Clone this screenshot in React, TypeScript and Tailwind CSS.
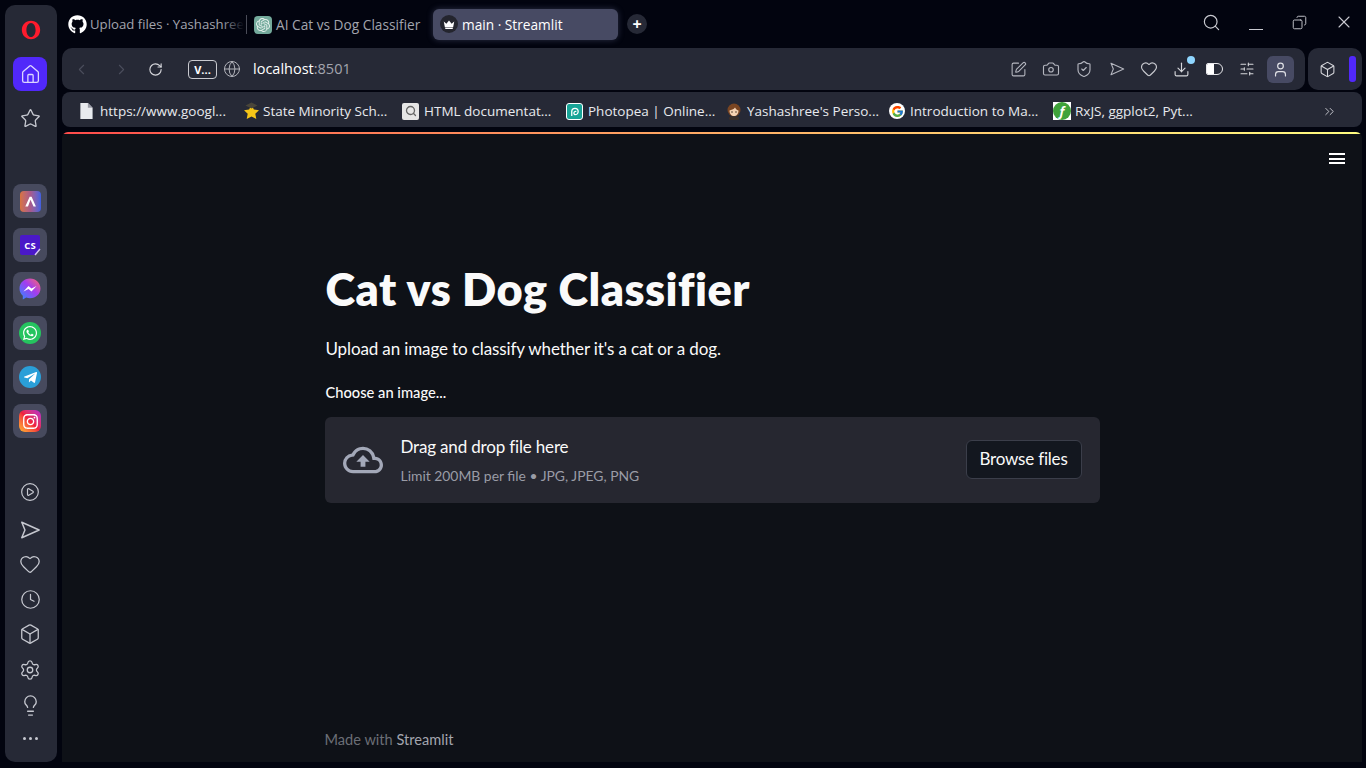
import { ReactNode } from "react"
import {
    Box, Camera, ChevronLeft, ChevronRight, ChevronsRight, CirclePlay, Clock, Copy, Download, Globe, Heart,
    Home, Lightbulb, RotateCw, Search, Settings, ShieldCheck, SlidersHorizontal, SquarePen, Star, User, X,
} from "lucide-react"
import { FaGithub, FaWhatsapp, FaTelegramPlane, FaInstagram } from "react-icons/fa"
import { FcGoogle } from "react-icons/fc"
import { SiOpenai } from "react-icons/si"

const UI_FONT = "font-['Open_Sans','Noto_Sans',sans-serif]"
const PAGE_FONT = "font-['Lato','Noto_Sans',sans-serif]"

function SendIcon({ className }: { className?: string }) {
    return (
        <svg viewBox="0 0 24 24" fill="none" stroke="currentColor" strokeWidth="1.6" strokeLinejoin="round" className={className}>
            <path d="M3 3.5 22 12 3 20.5 6.5 12Z" />
        </svg>
    )
}

function OperaLogo() {
    return (
        <svg viewBox="0 0 24 24" className="h-[20px] w-[20px]">
            <path fillRule="evenodd" fill="#ff1b2d" d="M12 1C5.600 1 1 5.900 1 12s4.600 11 11 11 11-4.900 11-11S18.400 1 12 1Zm0 2.500c3.200 0 5.500 3.800 5.500 8.500s-2.300 8.500-5.500 8.500-5.500-3.800-5.500-8.500 2.300-8.500 5.500-8.500Z" />
        </svg>
    )
}

function AppTile({ children }: { children: ReactNode }) {
    return <div className="flex h-[34px] w-[34px] items-center justify-center rounded-[8px] bg-[#474a5e]">{children}</div>
}

function Sidebar() {
    return (
        <aside className="mb-[6px] ml-[5px] mt-[5px] flex w-[52px] flex-col items-center rounded-[10px] bg-[#262936] pr-[2px] text-[#c6c8d0]">
            <div className="ml-[2px] mt-[15px]"><OperaLogo /></div>
            <div className="mt-[17px] flex h-[34px] w-[34px] items-center justify-center rounded-[8px] bg-[#5128fa] text-[#dcd6ff]">
                <Home size={21} strokeWidth={1.5} />
            </div>
            <Star size={21} strokeWidth={1.5} className="mt-[17px]" />

            <div className="mt-[55px] flex flex-col gap-[10px]">
                <AppTile>
                    <div className="flex h-[21px] w-[21px] items-center justify-center rounded-[4px] bg-linear-to-r from-[#d9733c] via-[#a85a8c] to-[#3f5fe0]">
                        <svg viewBox="0 0 12 12" className="h-[13px] w-[13px]"><path d="M5.200 1.500h1.800L11 10.500H8.800L6 4.300 3.700 10.500H1.200Z" fill="#fff" /></svg>
                    </div>
                </AppTile>
                <AppTile>
                    <svg viewBox="0 0 22 22" className="h-[22px] w-[22px]">
                        <path d="M3 1h16a2 2 0 0 1 2 2v12l-5 6H3a2 2 0 0 1-2-2V3a2 2 0 0 1 2-2Z" fill="#4a18c8" />
                        <path d="M16 21l5-6" stroke="#d8c8f5" strokeWidth="1.400" />
                        <text x="11" y="14.500" textAnchor="middle" fontSize="9.500" fontWeight="700" fill="#fff" fontFamily="Open Sans, sans-serif">CS</text>
                    </svg>
                </AppTile>
                <AppTile>
                    <svg viewBox="0 0 22 22" className="h-[22px] w-[22px]">
                        <defs>
                            <linearGradient id="msg" x1="0" y1="1" x2="1" y2="0">
                                <stop offset="0" stopColor="#2d8cff" />
                                <stop offset="0.55" stopColor="#a33cf0" />
                                <stop offset="1" stopColor="#ff6a6a" />
                            </linearGradient>
                        </defs>
                        <path d="M11 0.500C5 0.500 0.500 4.900 0.500 10.500c0 3 1.200 5.500 3.300 7.300V21.500l3.400-1.900c1.200.4 2.500.6 3.800.6 6 0 10.500-4.400 10.500-9.700S17 0.500 11 0.500Z" fill="url(#msg)" />
                        <path d="M4.500 13.500 9.500 8l3 2.600L17.500 8l-5 5.500-3-2.600Z" fill="#fff" />
                    </svg>
                </AppTile>
                <AppTile>
                    <div className="flex h-[22px] w-[22px] items-center justify-center rounded-full bg-[#25c45f] text-white"><FaWhatsapp size={16} /></div>
                </AppTile>
                <AppTile>
                    <div className="flex h-[22px] w-[22px] items-center justify-center rounded-full bg-[#2a9fd8] text-white"><FaTelegramPlane size={15} /></div>
                </AppTile>
                <AppTile>
                    <div className="flex h-[22px] w-[22px] items-center justify-center rounded-[6px] bg-linear-to-tr from-[#fdb32b] via-[#f0203c] to-[#b51fd0] text-white"><FaInstagram size={17} /></div>
                </AppTile>
            </div>

            <div className="mt-[44px] flex flex-col items-center">
                <CirclePlay size={20} strokeWidth={1.4} />
                <SendIcon className="mt-[17px] h-[22px] w-[22px]" />
                <Heart size={22} strokeWidth={1.4} className="mt-[12px]" />
                <Clock size={21} strokeWidth={1.4} className="mt-[14px]" />
                <Box size={22} strokeWidth={1.4} className="mt-[13px]" />
                <Settings size={22} strokeWidth={1.4} className="mt-[14px]" />
                <Lightbulb size={23} strokeWidth={1.4} className="mt-[13px]" />
                <div className="mt-[20px] flex gap-[3px]">
                    <span className="h-[3px] w-[3px] rounded-full bg-[#c6c8d0]" />
                    <span className="h-[3px] w-[3px] rounded-full bg-[#c6c8d0]" />
                    <span className="h-[3px] w-[3px] rounded-full bg-[#c6c8d0]" />
                </div>
            </div>
        </aside>
    )
}

function TabBar() {
    return (
        <div className={`flex h-[48px] items-center text-[13.700px] ${UI_FONT}`}>
            <div className="relative ml-[6px] flex w-[176px] items-center whitespace-nowrap pt-[2px] text-[13.200px] text-[#a3a5ae]">
                <FaGithub size={19} className="shrink-0 text-white" />
                <span className="ml-[3px]">Upload files · Yashashree</span>
                <span className="absolute inset-y-0 right-0 w-[22px] bg-linear-to-r from-transparent to-[#02040f]" />
            </div>
            <div className="ml-[2px] h-[19px] w-px bg-[#4a4c58]" />
            <div className="ml-[7px] mt-px flex h-[18px] w-[18px] items-center justify-center rounded-[4px] bg-[#74aa9c] text-[#e8f3ef]">
                <SiOpenai size={14} />
            </div>
            <span className="ml-[4px] mt-[2px] w-[157px] whitespace-nowrap text-[#a3a5ae]">AI Cat vs Dog Classifier</span>
            <div className="flex h-[31px] w-[185px] items-center rounded-[6px] bg-[#474a63] pl-[7px] text-white shadow-[0_0_6px_rgba(120,125,170,0.35)]">
                <span className="flex h-[18px] w-[18px] items-center justify-center rounded-full bg-[#24252e]">
                    <svg viewBox="0 0 16 12" className="h-[9px] w-[12px]"><path d="M1 2 4.500 5 8 0.500 11.500 5 15 2l-1.500 7.500h-11ZM3 10.300h10V12H3Z" fill="#fff" /></svg>
                </span>
                <span className="ml-[4px] mt-[2px]">main · Streamlit</span>
            </div>
            <div className="ml-[9px] flex h-[20px] w-[20px] items-center justify-center rounded-full bg-[#262936] text-[16px] font-bold leading-none text-white">+</div>
            <div className="-mt-[4px] ml-auto flex items-center text-[#c9cad0]">
                <Search size={19} strokeWidth={1.5} />
                <span className="ml-[28px] mt-[15px] h-[1.500px] w-[14px] bg-[#c9cad0]" />
                <Copy size={15} strokeWidth={1.5} className="ml-[29px] -scale-x-100" />
                <X size={20} strokeWidth={1.3} className="ml-[27px] mr-[8px]" />
            </div>
        </div>
    )
}

function AddressBar() {
    return (
        <div className="flex h-[42px] gap-[3px]">
            <div className={`flex flex-1 items-center rounded-[10px] bg-[#262936] ${UI_FONT}`}>
                <ChevronLeft size={17} strokeWidth={1.5} className="ml-[11px] text-[#4b4e5c]" />
                <ChevronRight size={17} strokeWidth={1.5} className="ml-[23px] text-[#4b4e5c]" />
                <RotateCw size={15} strokeWidth={1.8} className="ml-[18px] text-[#d6d7dc]" />
                <div className="ml-[25px] flex h-[19px] w-[29px] items-center justify-center rounded-[4px] border border-[#c9cad0] text-[11px] font-bold leading-none text-white">V...</div>
                <Globe size={18} strokeWidth={1.3} className="ml-[6px] text-[#b5b6bd]" />
                <span className="ml-[12px] text-[14.500px] text-white">localhost<span className="text-[#a3a5ae]">:8501</span></span>
                <div className="ml-auto flex items-center text-[#b5b7c0]">
                    <SquarePen size={17} strokeWidth={1.5} />
                    <Camera size={18} strokeWidth={1.5} className="ml-[15px]" />
                    <ShieldCheck size={18} strokeWidth={1.5} className="ml-[15px]" />
                    <SendIcon className="ml-[16px] h-[16px] w-[16px]" />
                    <Heart size={18} strokeWidth={1.5} className="ml-[15px] text-[#c9cad0]" />
                    <div className="relative ml-[15px] text-[#d6d7dc]">
                        <Download size={17} strokeWidth={1.6} />
                        <span className="absolute -right-[5px] -top-[5px] h-[8px] w-[8px] rounded-full bg-[#8fd6ff]" />
                    </div>
                    <div className="ml-[16px] flex h-[12px] w-[17px] overflow-hidden rounded-l-[2px] rounded-r-[6px] border border-[#e8e8ec]">
                        <span className="w-[7px] bg-white" />
                    </div>
                    <SlidersHorizontal size={16} strokeWidth={1.6} className="ml-[16px] text-[#d6d7dc]" />
                    <div className="ml-[12px] mr-[11px] flex h-[27px] w-[27px] items-center justify-center rounded-[6px] bg-[#474a63] text-[#e0e1e6]">
                        <User size={17} strokeWidth={1.7} />
                    </div>
                </div>
            </div>
            <div className="flex w-[54px] items-center rounded-[10px] bg-[#262936] text-[#d6d7dc]">
                <Box size={17} strokeWidth={1.5} className="ml-[11px]" />
                <span className="ml-[13px] h-[26px] w-[7px] rounded-[3px] bg-[#5128fa]" />
            </div>
        </div>
    )
}

const bookmarks: { label: string; box: string; icon: ReactNode }[] = [
    {
        label: "https://www.googl...",
        box: "w-[164px] gap-[7px]",
        icon: (
            <svg viewBox="0 0 14 17" className="h-[16px] w-[14px]"><path d="M1 0h8l5 5v12H1Z" fill="#e8eaee" /><path d="M9 0l5 5H9Z" fill="#9a9ca6" /></svg>
        ),
    },
    {
        label: "State Minority Sch...",
        box: "w-[159px] gap-[3px]",
        icon: (
            <svg viewBox="0 0 17 17" className="h-[18px] w-[17px]"><path d="M8.500 2.500l2.400 4.500 5.100.8-3.700 3.500 1 5.200-4.800-2.500L3.700 16.500l1-5.200L1 7.800l5.100-.8Z" fill="#f5c518" /><path d="M8.500 0 14.500 3 8.500 6 2.500 3Z" fill="#4a463a" /></svg>
        ),
    },
    {
        label: "HTML documentat...",
        box: "w-[164px] gap-[5px]",
        icon: (
            <div className="flex h-[17px] w-[17px] items-center justify-center rounded-[2px] bg-[#e6e6e6] text-[#666]"><Search size={12} strokeWidth={2.6} /></div>
        ),
    },
    {
        label: "Photopea | Online...",
        box: "w-[160px] gap-[5px]",
        icon: (
            <div className="flex h-[17px] w-[17px] items-center justify-center rounded-[3px] border border-white bg-[#18a497]">
                <svg viewBox="0 0 12 12" fill="none" stroke="#fff" strokeWidth="1.400" className="h-[11px] w-[11px]"><path d="M3 11V6a3.500 3.500 0 1 1 3.500 3.500A1.600 1.600 0 1 1 8 6" /></svg>
            </div>
        ),
    },
    {
        label: "Yashashree's Perso...",
        box: "w-[163px] gap-[5px]",
        icon: (
            <svg viewBox="0 0 16 17" className="h-[17px] w-[16px]">
                <circle cx="8" cy="7" r="6.500" fill="#7a4522" />
                <path d="M3.500 7.500C5 7 8 6.500 9 4.500c1 2 2.500 2.700 3.500 3 0 3.500-2 5.500-4.500 5.500S3.500 11 3.500 7.500Z" fill="#f6d3b3" />
                <circle cx="6" cy="9" r="0.700" fill="#2b1a10" />
                <circle cx="10" cy="9" r="0.700" fill="#2b1a10" />
                <rect x="3" y="13.500" width="10" height="3.500" rx="1.500" fill="#3a2e28" />
            </svg>
        ),
    },
    {
        label: "Introduction to Ma...",
        box: "w-[164px] gap-[5px]",
        icon: (
            <div className="flex h-[16px] w-[16px] items-center justify-center rounded-full bg-white"><FcGoogle size={13} /></div>
        ),
    },
    {
        label: "RxJS, ggplot2, Pyt...",
        box: "gap-[4px]",
        icon: (
            <div className="flex h-[18px] w-[18px] items-center justify-center bg-white">
                <div className="flex h-[18px] w-[18px] items-center justify-center rounded-full bg-[#3fa33a] text-[13px] font-bold italic leading-none text-white">f</div>
            </div>
        ),
    },
]

function BookmarksBar() {
    return (
        <div className={`mt-[2px] flex h-[35px] items-center rounded-[8px] bg-[#262936] pl-[17px] pt-[3px] text-[13.500px] text-[#e8e9ee] ${UI_FONT}`}>
            {bookmarks.map((b) => (
                <div key={b.label} className={`flex shrink-0 items-center whitespace-nowrap ${b.box}`}>
                    {b.icon}
                    <span>{b.label}</span>
                </div>
            ))}
            <ChevronsRight size={15} strokeWidth={1.5} className="ml-auto mr-[25px] text-[#c9cad0]" />
        </div>
    )
}

function UploadCloud() {
    return (
        <svg viewBox="0 0 24 24" className="h-[40px] w-[40px] text-[#a3a8b8]" fill="currentColor">
            <path d="M19.350 10.040A7.490 7.490 0 0 0 12 4C9.110 4 6.600 5.640 5.350 8.040A5.994 5.994 0 0 0 0 14c0 3.310 2.690 6 6 6h13c2.760 0 5-2.240 5-5 0-2.640-2.050-4.780-4.650-4.960ZM19 18H6c-2.210 0-4-1.790-4-4 0-2.050 1.530-3.760 3.560-3.970l1.070-.11.500-.95A5.469 5.469 0 0 1 12 6c2.620 0 4.880 1.860 5.390 4.430l.3 1.500 1.530.11A2.980 2.980 0 0 1 22 15c0 1.650-1.350 3-3 3ZM8 13h2.550v3h2.900v-3H16l-4-4Z" />
        </svg>
    )
}

function StreamlitPage() {
    return (
        <main className={`relative mt-[5px] flex flex-1 flex-col overflow-hidden rounded-t-[6px] bg-[#0e1117] text-[#fafafa] ${PAGE_FONT}`}>
            <div className="h-[2px] bg-linear-to-r from-[#ff4b4b] to-[#fffd80]" />
            <div className="absolute right-[17px] top-[21px] flex w-[16px] flex-col gap-[2.500px]">
                <span className="h-[2px] bg-white" />
                <span className="h-[2px] bg-white" />
                <span className="h-[2px] bg-white" />
            </div>
            <div className="mx-auto flex w-[775px] flex-1 flex-col">
                <h1 className="mt-[124px] pl-px text-[45px] font-extrabold leading-[62px] tracking-[0.5px]">Cat vs Dog Classifier</h1>
                <p className="mt-[15px] pl-px text-[17px] leading-[28px] tracking-[-0.125px]">Upload an image to classify whether it's a cat or a dog.</p>
                <label className="mt-[19px] pl-px text-[14.700px] font-medium leading-[20px]">Choose an image...</label>
                <div className="mt-[15px] flex h-[86px] items-center rounded-[6px] bg-[#262730] px-[18px]">
                    <UploadCloud />
                    <div className="ml-[18px] flex flex-col">
                        <span className="text-[17px] leading-[26px] tracking-[-0.17px]">Drag and drop file here</span>
                        <span className="mt-[6px] text-[13.900px] leading-[20px] text-[#9a9ca6]">Limit 200MB per file • JPG, JPEG, PNG</span>
                    </div>
                    <button className="mb-[2px] ml-auto flex h-[39px] w-[116px] items-center justify-center rounded-[6px] border border-[#3b3e4a] bg-[#13171f] text-[17px] tracking-[-0.2px]">Browse files</button>
                </div>
                <div className="mb-[12px] mt-auto text-[14.600px] leading-[20px] text-[#6b6e76]">Made with <span className="text-[#a3a5ae]">Streamlit</span></div>
            </div>
        </main>
    )
}

export default function App() {
    return (
        <div className="flex h-[768px] w-[1366px] overflow-hidden bg-[#02040f]">
            <Sidebar />
            <div className="mb-[6px] ml-[5px] mr-[4px] flex flex-1 flex-col">
                <TabBar />
                <AddressBar />
                <BookmarksBar />
                <StreamlitPage />
            </div>
        </div>
    )
}
